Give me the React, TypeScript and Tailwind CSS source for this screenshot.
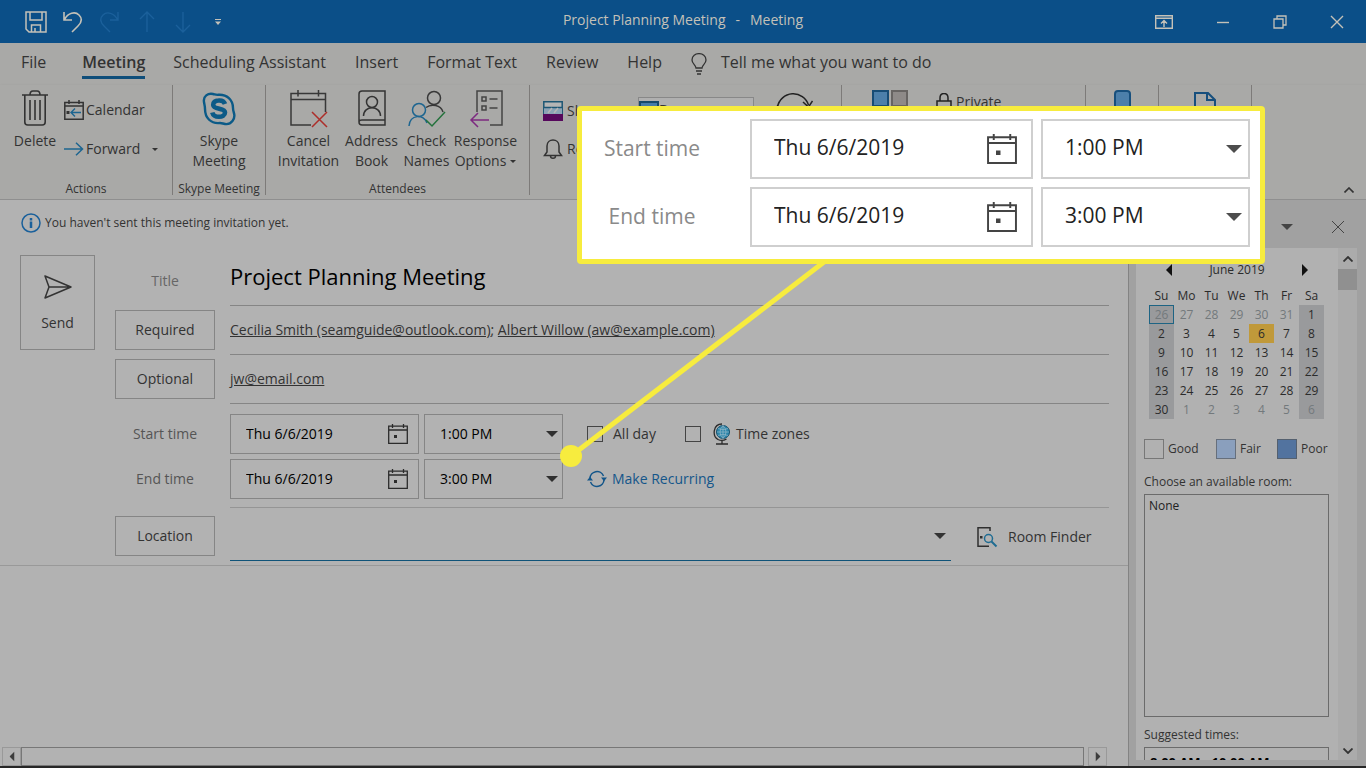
import type { ReactNode } from "react";
import clsx from "clsx";

type IconProps = { className?: string };

const TABS = ["File", "Meeting", "Scheduling Assistant", "Insert", "Format Text", "Review", "Help"];
const WEEKDAYS = ["Su", "Mo", "Tu", "We", "Th", "Fr", "Sa"];
const WEEKS = [
  [26, 27, 28, 29, 30, 31, 1],
  [2, 3, 4, 5, 6, 7, 8],
  [9, 10, 11, 12, 13, 14, 15],
  [16, 17, 18, 19, 20, 21, 22],
  [23, 24, 25, 26, 27, 28, 29],
  [30, 1, 2, 3, 4, 5, 6],
];

/* ---------- icons ---------- */

function Triangle({ className }: IconProps) {
  return (
    <svg viewBox="0 0 12 6" className={clsx("shrink-0", className)} fill="currentColor" aria-hidden="true">
      <path d="M0 0h12L6 6z" />
    </svg>
  );
}

function CalendarIcon({ className }: IconProps) {
  return (
    <svg viewBox="0 0 20 20" className={clsx("shrink-0", className)} fill="none" stroke="currentColor" strokeWidth="1.3" aria-hidden="true">
      <path d="M.7 2.2h18.6v17.1H.7zM.7 6h18.6M4.5 0v4M15.5 0v4" />
      <path d="M6 11h3v3H6z" fill="currentColor" stroke="none" />
    </svg>
  );
}

function TrashIcon() {
  return (
    <svg viewBox="0 0 26 36" className="h-9 w-[26px]" fill="none" stroke="#333" strokeWidth="1.6" aria-hidden="true">
      <path d="M0 5h26M8 5c0-3 1-4 3-4h4c2 0 3 1 3 4M2.8 5v27q0 3 3 3h14.4q3 0 3-3V5M8 10v20M13 10v20M18 10v20" />
    </svg>
  );
}

function CalendarReplyIcon() {
  return (
    <svg viewBox="0 0 20 20" className="size-5" fill="none" aria-hidden="true">
      <path d="M.8 2.5h18.4v16.7H.8zM.8 6h18.4M5 0v4M15 0v4" stroke="#333" strokeWidth="1.5" />
      <path d="M2.5 11h3v3h-3z" fill="#333" />
      <path d="M17 12.5H7M11 8.500l-4 4 4 4" stroke="#1d6590" strokeWidth="1.4" />
    </svg>
  );
}

function ForwardIcon() {
  return (
    <svg viewBox="0 0 20 14" className="h-3.5 w-5" fill="none" stroke="#1d6590" strokeWidth="1.5" aria-hidden="true">
      <path d="M0 7h18.500M12 .8L18.500 7 12 13.2" />
    </svg>
  );
}

function SkypeIcon() {
  return (
    <svg viewBox="0 0 34 36" className="h-9 w-[34px]" fill="none" stroke="#0b5a87" aria-hidden="true">
      <path
        d="M2 12C1 6 6 3 11 4c2 .4 3 1 5 .8C25 4 31 10 31 18c0 2 .3 3 .8 4.500C34 29 29 35 23 34c-2-.3-3-1-5-1C9 34 3 28 3 19c0-3-.7-4.500-1-7z"
        strokeWidth="2.4"
      />
      <path d="M23 14c-1-3-4-3.700-6.500-3.500-3.500.2-5.500 2-5.300 4.300C11.500 20 23 17.500 23 22.500c0 3-3 4.300-6 4.300-3.500 0-6-1.600-6.700-4.300" strokeWidth="4.600" />
    </svg>
  );
}

function CancelInvitationIcon() {
  return (
    <svg viewBox="0 0 38 38" className="size-[38px]" fill="none" aria-hidden="true">
      <path d="M21 35H1V3.500h34.500V22M1 9.500h34.500M8 0v6.500M28.500 0v6.500" stroke="#383838" strokeWidth="1.5" />
      <path d="M22 22l15 15M37 22L22 37" stroke="#ad2e2a" strokeWidth="1.5" />
    </svg>
  );
}

function AddressBookIcon() {
  return (
    <svg viewBox="0 0 28 38" className="h-[38px] w-7" fill="none" stroke="#333" strokeWidth="1.5" aria-hidden="true">
      <path d="M27 30V1H4Q1 1 1 4v28q0 3 3 3h23v-5H4q-3 0-3 2" />
      <circle cx="14" cy="12" r="5.5" />
      <path d="M5.500 26c0-11 17-11 17 0" />
    </svg>
  );
}

function CheckNamesIcon() {
  return (
    <svg viewBox="0 0 38 38" className="size-[38px]" fill="none" strokeWidth="1.5" aria-hidden="true">
      <circle cx="26" cy="8" r="6.5" stroke="#383838" />
      <path d="M18 17.500c5-4 15-3 17 4.500" stroke="#383838" />
      <circle cx="11" cy="20" r="6.5" stroke="#1d6590" />
      <path d="M1 36c1-12 15-12 18-3" stroke="#1d6590" />
      <path d="M18 30l6 6 13-14" stroke="#24723c" />
    </svg>
  );
}

function ResponseIcon() {
  return (
    <svg viewBox="0 0 34 38" className="h-[38px] w-[34px]" fill="none" strokeWidth="1.5" aria-hidden="true">
      <path d="M8 22V1h25v34H21" stroke="#444" />
      <path d="M13 7h4v4h-4zM13 16h4v4h-4zM20.500 9h8M20.500 18h8" stroke="#444" />
      <path d="M20 30H2M9 23l-7 7 7 7" stroke="#7d2a80" />
    </svg>
  );
}

function ShowAsIcon() {
  return (
    <svg viewBox="0 0 20 20" className="size-5 shrink-0" aria-hidden="true">
      <path d="M.8.8h18.4v18.4H.8z" fill="#b5b5b5" stroke="#1c5674" strokeWidth="1.5" />
      <path d="M1 7h18v6H1z" fill="#8ba2b5" />
      <path d="M1 6.500h18" stroke="#1c5674" strokeWidth="1.5" />
      <path d="M5 12l4-5M11 12l4-5" stroke="#b5b5b5" strokeWidth="1.5" />
      <path d="M0 13h20v7H0z" fill="#56085c" />
    </svg>
  );
}

function BellIcon() {
  return (
    <svg viewBox="0 0 20 20" className="size-5 shrink-0" fill="none" stroke="#333" strokeWidth="1.5" aria-hidden="true">
      <path d="M1.500 16.500h17L16 13V7c0-8-12-8-12 0v6zM7.500 17c0 3 5 3 5 0" />
    </svg>
  );
}

function RecurIcon() {
  return (
    <svg viewBox="0 0 20 20" className="size-5 shrink-0" fill="none" stroke="currentColor" strokeWidth="1.500" aria-hidden="true">
      <path d="M3 9.500A7 7 0 0 1 16.500 7M17 10.500A7 7 0 0 1 3.500 13" />
      <path d="M14 8.500h6l-3 3.800zM0 11.500h6L3 7.700z" fill="currentColor" stroke="none" />
    </svg>
  );
}

function RecurrenceIcon() {
  return (
    <svg viewBox="0 0 40 36" className="h-9 w-10" fill="none" stroke="#222" strokeWidth="1.5" aria-hidden="true">
      <path d="M4.500 17A16 16 0 0 1 35.500 15M35.500 20A16 16 0 0 1 4.500 21" />
      <path d="M30 12l5.500 5 4-6M.5 22l4-6 5.500 5" />
    </svg>
  );
}

function GlobeIcon() {
  return (
    <svg viewBox="0 0 18 22" className="h-[22px] w-[18px]" fill="none" aria-hidden="true">
      <circle cx="10" cy="9" r="6.500" fill="#2b86ab" stroke="#15516e" />
      <path d="M4 9h12M10 2.500v13M5 5.500q5 2.500 10 0M5 12.500q5-2.500 10 0M10 2.500q-6 6.500 0 13M10 2.500q6 6.500 0 13" stroke="#a4c0cc" strokeWidth=".6" />
      <path d="M9 1C0 1-1 13 5 16.500c3 1.500 6 1 8.500-.5M9 17v4M3 21h12" stroke="#2b2b2b" strokeWidth="1.3" />
    </svg>
  );
}

function RoomFinderIcon() {
  return (
    <svg viewBox="0 0 22 22" className="size-[22px]" fill="none" aria-hidden="true">
      <path d="M14 5V1.800H2v18.500h11" stroke="#2f2f2f" strokeWidth="1.5" />
      <path d="M4 10h2.500v2.500H4z" fill="#2f2f2f" />
      <circle cx="12.5" cy="12.5" r="4" stroke="#1f6c92" strokeWidth="1.5" />
      <path d="M15.500 15.500l5 5" stroke="#1f6c92" strokeWidth="2" />
    </svg>
  );
}

/* ---------- shared pieces ---------- */

function RibbonButton({ icon, lines, menu, className }: { icon: ReactNode; lines: string[]; menu?: boolean; className?: string }) {
  return (
    <button type="button" className={clsx("flex flex-col items-center text-sm leading-5", className)}>
      <span className="flex h-[41px] items-start">{icon}</span>
      {lines.map((line, i) => (
        <span key={line} className="flex items-center gap-1 whitespace-nowrap">
          {line}
          {menu && i === lines.length - 1 && <Triangle className="h-[3px] w-1.5" />}
        </span>
      ))}
    </button>
  );
}

function RibbonGroup({ caption, className, children }: { caption?: string; className?: string; children?: ReactNode }) {
  return (
    <section className={clsx("flex shrink-0 flex-col border-r border-[#7d7b79]", className)}>
      <div className="flex flex-1 items-start justify-center pt-[5px]">{children}</div>
      {caption && <h3 className="text-center text-xs leading-3 whitespace-nowrap">{caption}</h3>}
    </section>
  );
}

function DateField({ id, value, large }: { id: string; value: string; large?: boolean }) {
  return (
    <div
      className={clsx(
        "flex items-center border",
        large ? "h-[60px] w-[283px] border-2 border-[#cfcfcf] pr-[14px] pl-[22px]" : "h-10 w-[189px] border-[#858585] pr-[10px] pl-[15px]",
      )}
    >
      <input
        id={id}
        type="text"
        defaultValue={value}
        className={clsx("min-w-0 flex-1 bg-transparent outline-none", large ? "pb-[3px] text-[21px] text-[#222]" : "text-sm text-black")}
      />
      <button type="button" aria-label="Pick a date" className={large ? "text-[#444]" : "text-[#2b2b2b]"}>
        <CalendarIcon className={large ? "size-[30px]" : "size-5"} />
      </button>
    </div>
  );
}

function TimeField({ label, value, large }: { label: string; value: string; large?: boolean }) {
  return (
    <div
      className={clsx(
        "flex items-center border",
        large ? "h-[60px] w-[209px] border-2 border-[#cfcfcf] pr-1.5 pl-[22px]" : "h-10 w-[139px] border-[#858585] pr-1 pl-[15px]",
      )}
    >
      <select
        aria-label={label}
        defaultValue={value}
        className={clsx("min-w-0 flex-1 appearance-none bg-transparent outline-none", large ? "pb-[3px] text-[21px] text-[#222]" : "text-sm text-black")}
      >
        <option>{value}</option>
      </select>
      <Triangle className={large ? "h-2 w-4 text-[#4d4d4d]" : "h-1.5 w-3 text-[#2f2f2f]"} />
    </div>
  );
}

/* ---------- window parts ---------- */

function TitleBar() {
  return (
    <header className="grid h-[43px] shrink-0 grid-cols-[1fr_auto_1fr] items-center bg-[#0b4f88] text-[#c4c1b8]">
      <div className="flex items-center pl-[25px]">
        <button type="button" aria-label="Save" className="mr-4">
          <svg viewBox="0 0 22 22" className="size-[22px]" fill="none" stroke="currentColor" strokeWidth="1.5">
            <path d="M1 1h20v20H4l-3-3zM5 1v8h12V1M6.500 21v-7h9v7M10 17v4" />
          </svg>
        </button>
        <button type="button" aria-label="Undo" className="mr-4">
          <svg viewBox="0 0 20 22" className="h-[22px] w-5" fill="none" stroke="currentColor" strokeWidth="1.6">
            <path d="M1 1v8h8M1.500 8.500C5 2 12 0 16 4s2 8-1 11l-6 6" />
          </svg>
        </button>
        <button type="button" aria-label="Redo" disabled className="mr-5 text-[#1b609b]">
          <svg viewBox="0 0 20 22" className="h-[22px] w-5" fill="none" stroke="currentColor" strokeWidth="1.4">
            <path d="M19 1v8h-8M18.500 8.500C15 2 8 0 4 4S2 12 5 15l6 6" />
          </svg>
        </button>
        <button type="button" aria-label="Previous item" disabled className="mr-5 text-[#1b609b]">
          <svg viewBox="0 0 16 22" className="h-[22px] w-4" fill="none" stroke="currentColor" strokeWidth="1.4">
            <path d="M8 21V1M1 8l7-7 7 7" />
          </svg>
        </button>
        <button type="button" aria-label="Next item" disabled className="mr-6 text-[#1b609b]">
          <svg viewBox="0 0 16 22" className="h-[22px] w-4" fill="none" stroke="currentColor" strokeWidth="1.4">
            <path d="M8 1v20M1 14l7 7 7-7" />
          </svg>
        </button>
        <button type="button" aria-label="Customize toolbar">
          <svg viewBox="0 0 6 6" className="size-1.5" fill="currentColor">
            <path d="M0 0h6v1H0zM0 2.500h6L3 6z" />
          </svg>
        </button>
      </div>
      <h1 className="flex gap-2.5 pb-1 text-sm">
        <span>Project Planning Meeting</span>
        <span>-</span>
        <span>Meeting</span>
      </h1>
      <div className="flex items-center justify-end gap-[43px] pr-[22px]">
        <button type="button" aria-label="Ribbon display options">
          <svg viewBox="0 0 18 14" className="h-3.5 w-[18px]" fill="none" stroke="currentColor" strokeWidth="1.4">
            <path d="M.7.7h16.600v12.600H.7zM.7 3.200h16.600M9 12V6M6 8.500l3-3 3 3" />
          </svg>
        </button>
        <button type="button" aria-label="Minimize">
          <svg viewBox="0 0 14 14" className="size-3.5" stroke="currentColor" strokeWidth="1.4">
            <path d="M1 7.500h12" />
          </svg>
        </button>
        <button type="button" aria-label="Restore">
          <svg viewBox="0 0 14 14" className="size-3.5" fill="none" stroke="currentColor" strokeWidth="1.3">
            <path d="M1 4h9v9H1zM4 4V1h9v9h-3" />
          </svg>
        </button>
        <button type="button" aria-label="Close">
          <svg viewBox="0 0 14 14" className="size-3.5" stroke="currentColor" strokeWidth="1.4">
            <path d="M1 1l12 12M13 1L1 13" />
          </svg>
        </button>
      </div>
    </header>
  );
}

function TabStrip() {
  return (
    <nav className="flex h-[42px] shrink-0 items-start pt-1.5 pl-[21px] text-base leading-[26px]">
      {TABS.map((tab) => (
        <a
          key={tab}
          href="#"
          className={clsx(
            "h-[30px] whitespace-nowrap",
            tab === "Meeting" ? "mr-7 border-b-[3px] border-[#0f4e7a] font-semibold" : tab === "File" ? "mr-9" : "mr-[29px]",
          )}
        >
          {tab}
        </a>
      ))}
      <a href="#" className="flex gap-3.5">
        <svg viewBox="0 0 16 22" className="mt-1 h-[22px] w-4" fill="none" stroke="#333" strokeWidth="1.3" aria-hidden="true">
          <path d="M5 15c0-3-4-4-4-8C1-1.500 15-1.500 15 7c0 4-4 5-4 8zM5 18h6M6 21h4" />
        </svg>
        Tell me what you want to do
      </a>
    </nav>
  );
}

function Ribbon() {
  return (
    <div className="flex h-[115px] shrink-0 overflow-hidden border-b border-[#8f8f8f] pb-1 shadow-sm">
      <RibbonGroup caption="Actions" className="w-[173px]">
        <RibbonButton className="w-[70px]" icon={<TrashIcon />} lines={["Delete"]} />
        <div className="-ml-1.5 flex flex-1 flex-col gap-[19px] pt-[10px] text-sm leading-5">
          <button type="button" className="flex items-center gap-0.5">
            <CalendarReplyIcon />
            Calendar
          </button>
          <button type="button" className="flex items-center gap-0.5">
            <ForwardIcon />
            Forward
            <Triangle className="ml-2.5 h-[3px] w-1.5" />
          </button>
        </div>
      </RibbonGroup>
      <RibbonGroup caption="Skype Meeting" className="w-[93px]">
        <RibbonButton className="flex-1" icon={<SkypeIcon />} lines={["Skype", "Meeting"]} />
      </RibbonGroup>
      <RibbonGroup caption="Attendees" className="w-[264px]">
        <RibbonButton className="w-[66px]" icon={<CancelInvitationIcon />} lines={["Cancel", "Invitation"]} />
        <RibbonButton className="w-[60px]" icon={<AddressBookIcon />} lines={["Address", "Book"]} />
        <RibbonButton className="w-[50px]" icon={<CheckNamesIcon />} lines={["Check", "Names"]} />
        <RibbonButton className="w-[68px]" icon={<ResponseIcon />} lines={["Response", "Options"]} menu />
      </RibbonGroup>
      <RibbonGroup className="w-[312px] items-start pl-[13px]">
        <div className="flex w-[95px] flex-col gap-[18px] pt-[11px] text-sm leading-5">
          <label htmlFor="show-as" className="flex items-center gap-1 whitespace-nowrap">
            <ShowAsIcon />
            Show As:
          </label>
          <label htmlFor="reminder" className="flex items-center gap-1 whitespace-nowrap">
            <BellIcon />
            Reminder:
          </label>
        </div>
        <div className="flex w-[116px] flex-col pt-[7px] text-sm">
          <div className="flex h-[26px] items-center border border-[#888] bg-[#b0b0b0]">
            <span className="h-[18px] w-5 border-2 border-[#16496b] bg-[#457ba8]" />
            <select id="show-as" className="min-w-0 flex-1 appearance-none">
              <option>Busy</option>
            </select>
          </div>
        </div>
        <button type="button" aria-label="Recurrence" className="ml-[19px]">
          <RecurrenceIcon />
        </button>
      </RibbonGroup>
      <RibbonGroup className="w-[244px] items-start pl-[30px]">
        <button type="button" aria-label="Categorize" className="flex gap-0.5">
          <span className="size-[17px] border-2 border-[#174c75] bg-[#4c7faa]" />
          <span className="size-[17px] border-2 border-[#676462] bg-[#8e8a88]" />
        </button>
        <button type="button" className="ml-7 flex items-center gap-1 pt-0.5 text-sm leading-5">
          <svg viewBox="0 0 16 18" className="h-[18px] w-4" fill="none" stroke="#222" strokeWidth="1.5" aria-hidden="true">
            <path d="M1 8h14v9H1zM4 8V5c0-6 8-6 8 0v3" />
          </svg>
          Private
        </button>
      </RibbonGroup>
      <RibbonGroup className="w-[73px]">
        <button type="button" aria-label="Dictate" className="h-[30px] w-[17px] rounded border-2 border-[#174f7d] bg-[#4c7faa]" />
      </RibbonGroup>
      <RibbonGroup className="w-[93px]">
        <button type="button" aria-label="View templates">
          <svg viewBox="0 0 22 30" className="h-[30px] w-[22px]" fill="none" stroke="#174f7d" strokeWidth="2" aria-hidden="true">
            <path d="M1 29V3h13l7 7v19zM13 3v7h8" />
          </svg>
        </button>
      </RibbonGroup>
      <button type="button" aria-label="Collapse the ribbon" className="mr-3 ml-auto self-end pb-0.5">
        <svg viewBox="0 0 10 6" className="h-1.5 w-2.5" fill="none" stroke="#333" strokeWidth="1.6">
          <path d="M.5 5.500L5 1l4.500 4.500" />
        </svg>
      </button>
    </div>
  );
}

function FormRow({ label, className, children }: { label: ReactNode; className?: string; children: ReactNode }) {
  return (
    <div className={clsx("flex gap-[15px]", className)}>
      <div className="flex w-[100px] shrink-0 flex-col">{label}</div>
      {children}
    </div>
  );
}

const boxedLabel = "h-10 border border-[#858585] text-center";

function MeetingForm() {
  return (
    <form className="flex shrink-0 gap-5 border-b border-[#999] pt-[9px] pr-[19px] pb-1 pl-5 text-sm">
      <button type="button" className="flex h-[95px] w-[75px] shrink-0 flex-col items-center gap-3.5 border border-[#858585] pt-[19px]">
        <svg viewBox="0 0 28 24" className="h-6 w-7" fill="none" stroke="#333" strokeWidth="1.5" strokeLinejoin="round" aria-hidden="true">
          <path d="M1 1l26 11L1 23l4-11zM5 12h22" />
        </svg>
        Send
      </button>
      <div className="min-w-0 flex-1">
        <FormRow className="h-[51px]" label={<label htmlFor="title" className="pt-4 text-center text-[#666]">Title</label>}>
          <input
            id="title"
            defaultValue="Project Planning Meeting"
            className="min-w-0 flex-1 border-b border-[#858585] pb-1.5 text-[22px] text-black outline-none"
          />
        </FormRow>
        <FormRow className="h-[49px]" label={<button type="button" className={clsx(boxedLabel, "mt-1")}>Required</button>}>
          <div className="flex flex-1 items-center border-b border-[#858585] whitespace-pre">
            <a href="mailto:seamguide@outlook.com" className="underline">Cecilia Smith (seamguide@outlook.com)</a>;{" "}
            <a href="mailto:aw@example.com" className="underline">Albert Willow (aw@example.com)</a>
          </div>
        </FormRow>
        <FormRow className="h-[49px]" label={<button type="button" className={clsx(boxedLabel, "mt-1")}>Optional</button>}>
          <div className="flex flex-1 items-center border-b border-[#858585]">
            <a href="mailto:jw@email.com" className="underline">jw@email.com</a>
          </div>
        </FormRow>
        <FormRow
          label={
            <>
              <label htmlFor="start" className="mt-[10px] h-10 text-center leading-10 text-[#555]">Start time</label>
              <label htmlFor="end" className="mt-[5px] h-10 text-center leading-10 text-[#555]">End time</label>
            </>
          }
        >
          <div className="flex flex-1 flex-col gap-[5px] border-b border-[#959595] pt-[10px] pb-2">
            <div className="flex items-center gap-[5px]">
              <DateField id="start" value="Thu 6/6/2019" />
              <TimeField label="Start hour" value="1:00 PM" />
              <label className="ml-[19px] flex items-center gap-[10px]">
                <input type="checkbox" className="size-4 appearance-none border border-[#444]" />
                All day
              </label>
              <label className="ml-6 flex items-center">
                <input type="checkbox" className="mr-3 size-4 appearance-none border border-[#444]" />
                <GlobeIcon />
                <span className="ml-[5px]">Time zones</span>
              </label>
            </div>
            <div className="flex items-center gap-[5px]">
              <DateField id="end" value="Thu 6/6/2019" />
              <TimeField label="End hour" value="3:00 PM" />
              <button type="button" className="ml-[19px] flex items-center gap-[5px] text-[#14568a]">
                <RecurIcon />
                Make Recurring
              </button>
            </div>
          </div>
        </FormRow>
        <FormRow className="h-[53px]" label={<label htmlFor="location" className={clsx(boxedLabel, "mt-2 leading-[38px]")}>Location</label>}>
          <div className="flex flex-1 items-center border-b border-[#0f5378] pt-1 pr-[5px]">
            <input id="location" className="min-w-0 flex-1 outline-none" />
            <Triangle className="h-1.5 w-3" />
          </div>
          <button type="button" className="flex w-[143px] items-center gap-2.5 pt-1 pl-[10px]">
            <RoomFinderIcon />
            Room Finder
          </button>
        </FormRow>
      </div>
    </form>
  );
}

function HorizontalScroll() {
  return (
    <div className="flex h-[19px] shrink-0 pr-[21px] pl-0.5 text-[#3c3c3c]">
      <button type="button" aria-label="Scroll left" className="flex w-[19px] items-center justify-center border border-[#999]">
        <Triangle className="h-[5px] w-2.5 rotate-90" />
      </button>
      <div className="mr-1 flex-1 border border-[#777]" />
      <button type="button" aria-label="Scroll right" className="flex w-[19px] items-center justify-center border border-[#999]">
        <Triangle className="h-[5px] w-2.5 -rotate-90" />
      </button>
    </div>
  );
}

function MonthCalendar() {
  return (
    <div className="pr-[14px] pl-[13px] text-xs text-[#2b2b2b]">
      <div className="flex h-[38px] items-center justify-between pt-3 pr-4 pb-1.5 pl-[17px]">
        <button type="button" aria-label="Previous month">
          <svg viewBox="0 0 6 12" className="h-3 w-1.5" fill="#111"><path d="M6 0v12L0 6z" /></svg>
        </button>
        <span>June 2019</span>
        <button type="button" aria-label="Next month">
          <svg viewBox="0 0 6 12" className="h-3 w-1.5" fill="#111"><path d="M0 0v12l6-6z" /></svg>
        </button>
      </div>
      <table className="w-[175px] table-fixed text-center">
        <thead>
          <tr className="h-[19px]">
            {WEEKDAYS.map((day) => (
              <th key={day} className="p-0 leading-[19px] font-normal">{day}</th>
            ))}
          </tr>
        </thead>
        <tbody>
          {WEEKS.map((week, row) => (
            <tr key={row} className="h-[19px]">
              {week.map((day, col) => {
                const outside = (row === 0 && day > 7) || (row === 5 && day < 30);
                return (
                  <td
                    key={col}
                    className={clsx(
                      "p-0 leading-[19px]",
                      outside && "text-[#73797c]",
                      (col === 0 || col === 6) && "bg-[#999a9c]",
                      row === 1 && day === 6 && "bg-[#c0993a]",
                      row === 0 && col === 0 && "inset-ring inset-ring-[#1e6484]",
                    )}
                  >
                    {day}
                  </td>
                );
              })}
            </tr>
          ))}
        </tbody>
      </table>
    </div>
  );
}

function RoomFinderPane() {
  return (
    <aside className="flex w-[238px] shrink-0 flex-col border-l border-[#838383] bg-[#a1a1a1] pb-1.5 pl-[7px]">
      <div className="flex h-12 shrink-0 items-center justify-end gap-[38px] pt-1.5 pr-[21px] text-[#444]">
        <button type="button" aria-label="Pane options">
          <Triangle className="h-1.5 w-3" />
        </button>
        <button type="button" aria-label="Close pane">
          <svg viewBox="0 0 14 14" className="size-3.5" stroke="currentColor"><path d="M1 1l12 12M13 1L1 13" /></svg>
        </button>
      </div>
      <div className="flex min-h-0 flex-1 pr-[9px]">
        <div className="flex flex-1 flex-col overflow-hidden bg-[#b1b1b1] text-xs">
          <MonthCalendar />
          <div className="mt-5 flex shrink-0 items-center pl-2 leading-5">
            <span className="mr-1 size-5 border border-[#777]" />
            <span className="w-12">Good</span>
            <span className="mr-1 size-5 border border-[#666f7c] bg-[#8a9fbd]" />
            <span className="w-[37px]">Fair</span>
            <span className="mr-1 size-5 border border-[#54606f] bg-[#52739f]" />
            <span>Poor</span>
          </div>
          <label htmlFor="rooms" className="mt-[13px] shrink-0 pl-2 leading-5">Choose an available room:</label>
          <select id="rooms" size={4} className="mt-0.5 mr-[9px] ml-2 h-[223px] shrink-0 overflow-hidden border border-[#6b6b6b] bg-transparent py-0.5 text-[#222]">
            <option className="px-1">None</option>
          </select>
          <h3 className="mt-2 shrink-0 pl-2 leading-5">Suggested times:</h3>
          <div className="mt-0.5 mr-[9px] ml-2 h-24 shrink-0 border border-[#6b6b6b] px-[5px] pt-1.5 text-[13px] leading-4 font-bold text-black">
            8:00 AM - 10:00 AM
          </div>
        </div>
        <div className="flex w-[19px] flex-col items-center justify-between bg-[#ababab] pt-2 pb-1.5">
          <div className="flex flex-col items-center gap-[7px]">
            <svg viewBox="0 0 10 6" className="h-1.5 w-2.5" fill="none" stroke="#333" strokeWidth="1.8"><path d="M.5 5.500L5 1l4.500 4.500" /></svg>
            <div className="h-[21px] w-[19px] bg-[#909090]" />
          </div>
          <svg viewBox="0 0 10 6" className="h-1.5 w-2.5" fill="none" stroke="#333" strokeWidth="1.8"><path d="M.5.5L5 5 9.500.5" /></svg>
        </div>
      </div>
    </aside>
  );
}

/* Magnified copy of the start and end fields, tied to them by a yellow line. */
function Callout() {
  return (
    <>
      <svg viewBox="0 0 280 210" className="pointer-events-none absolute top-[260px] left-[558px] h-[210px] w-[280px]" aria-hidden="true">
        <path d="M266 2L13 196" stroke="#f7ec3e" strokeWidth="5" />
        <circle cx="13" cy="196" r="11" fill="#f7ec3e" />
      </svg>
      <div className="absolute top-[106px] left-[577px] flex w-[688px] flex-col gap-2 rounded-sm border-[5px] border-[#f7ec3e] bg-white pt-2 pb-3">
        {[
          ["Start time", "1:00 PM"],
          ["End time", "3:00 PM"],
        ].map(([label, time]) => (
          <div key={label} className="flex items-center gap-2">
            <label htmlFor={`zoom-${label}`} className="mr-5 w-[140px] text-center text-[21px] text-[#8a8a8a]">
              {label}
            </label>
            <DateField id={`zoom-${label}`} value="Thu 6/6/2019" large />
            <TimeField label={`${label} hour`} value={time} large />
          </div>
        ))}
      </div>
    </>
  );
}

export default function App() {
  return (
    <div className="relative flex h-screen flex-col overflow-hidden bg-[#a9a9a7] font-['Open_Sans','Noto_Sans',sans-serif] text-[#333]">
      <TitleBar />
      <TabStrip />
      <Ribbon />
      <div className="flex min-h-0 flex-1 bg-[#b2b2b2]">
        <main className="flex min-w-0 flex-1 flex-col">
          <div className="flex h-[46px] shrink-0 items-center gap-1 pl-[21px] text-xs">
            <svg viewBox="0 0 20 20" className="size-5" fill="none" stroke="#1a609b" aria-hidden="true">
              <circle cx="10" cy="10" r="9" strokeWidth="1.5" />
              <path d="M10 5v2.500M10 8.500V15" strokeWidth="2.5" />
            </svg>
            You haven't sent this meeting invitation yet.
          </div>
          <MeetingForm />
          <textarea aria-label="Message" className="min-h-0 flex-1 resize-none p-5 outline-none" />
          <HorizontalScroll />
        </main>
        <RoomFinderPane />
      </div>
      <div className="h-0.5 shrink-0 bg-[#272727]" />
      <Callout />
    </div>
  );
}
